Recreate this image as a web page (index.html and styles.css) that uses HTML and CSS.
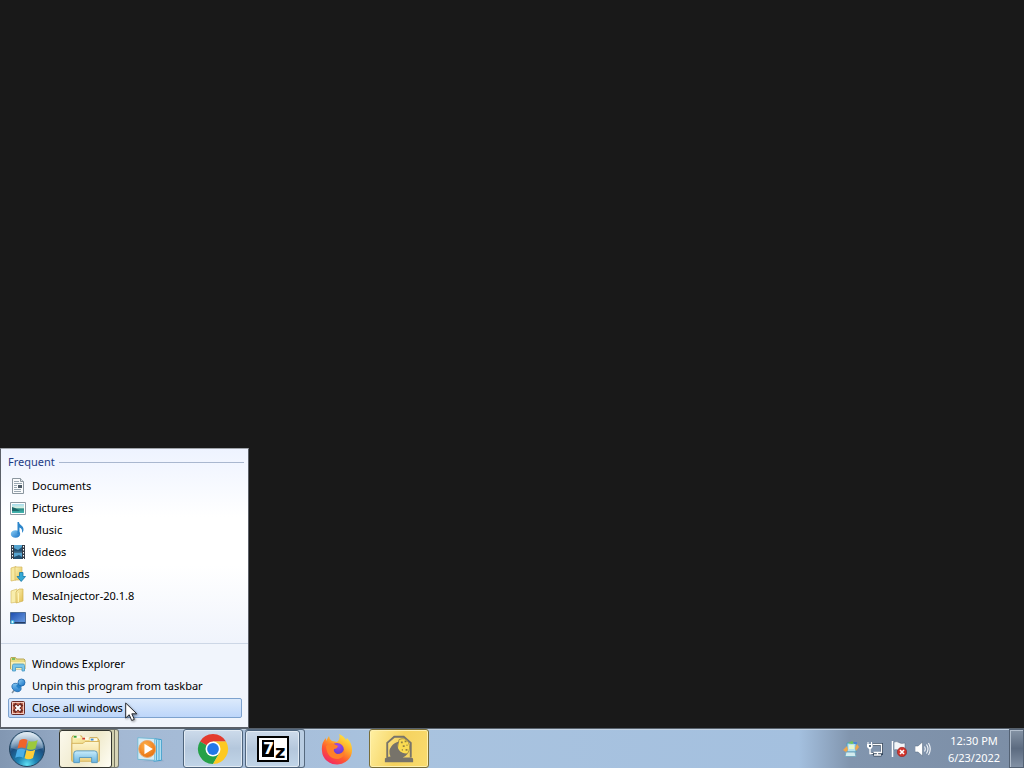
FILE: index.html
```html
<!DOCTYPE html>
<html lang="en">
<head>
<meta charset="utf-8">
<title>Desktop</title>
<link rel="stylesheet" href="styles.css">
</head>
<body>
<svg width="0" height="0" class="defs" aria-hidden="true">
  <defs>
    <linearGradient id="folder" x1="0" y1="0" x2="1" y2="1"><stop offset="0" stop-color="#fbf3b8"/><stop offset="1" stop-color="#e3bd4e"/></linearGradient>
    <linearGradient id="paper" x1="0" y1="0" x2="0" y2="1"><stop offset="0" stop-color="#fdf6cf"/><stop offset="1" stop-color="#efd486"/></linearGradient>
    <linearGradient id="blue" x1="0" y1="0" x2="1" y2="1"><stop offset="0" stop-color="#8fd0f6"/><stop offset="1" stop-color="#1670c4"/></linearGradient>
    <linearGradient id="screen" x1="0" y1="0" x2="1" y2="1"><stop offset="0" stop-color="#1c4cae"/><stop offset="1" stop-color="#6fa0e4"/></linearGradient>
    <linearGradient id="sea" x1="0" y1="0" x2="0" y2="1"><stop offset="0" stop-color="#a5dcee"/><stop offset=".4" stop-color="#d4eee0"/><stop offset=".55" stop-color="#2a8a86"/><stop offset="1" stop-color="#46b7b2"/></linearGradient>
    <linearGradient id="stand" x1="0" y1="0" x2="0" y2="1"><stop offset="0" stop-color="#c9ecfb"/><stop offset="1" stop-color="#68b4e0"/></linearGradient>
    <radialGradient id="orb" cx=".5" cy=".95" r=".9"><stop offset="0" stop-color="#5fe0f4"/><stop offset=".3" stop-color="#1f84b4"/><stop offset=".65" stop-color="#1c4f80"/><stop offset="1" stop-color="#8fb4d0"/></radialGradient>
    <linearGradient id="shine" x1="0" y1="0" x2="0" y2="1"><stop offset="0" stop-color="#fff" stop-opacity=".75"/><stop offset="1" stop-color="#fff" stop-opacity=".15"/></linearGradient>
    <radialGradient id="orange" cx=".4" cy=".3" r=".8"><stop offset="0" stop-color="#ffb04c"/><stop offset="1" stop-color="#e56a08"/></radialGradient>
    <linearGradient id="fox" x1=".85" y1="0" x2=".2" y2="1"><stop offset="0" stop-color="#fff04a"/><stop offset=".35" stop-color="#ffb02a"/><stop offset=".65" stop-color="#ff5a30"/><stop offset="1" stop-color="#f0206c"/></linearGradient>
    <radialGradient id="globe" cx=".6" cy=".2" r=".9"><stop offset="0" stop-color="#a049e8"/><stop offset="1" stop-color="#4438c8"/></radialGradient>
    <symbol id="explorer" viewBox="0 0 34 32">
      <path d="M2 28V4l1-2h9l2 3h6l1-1h8l2 3v21z" fill="url(#folder)" stroke="#c9a34b"/>
      <path d="M4 3h7M13 5h7M21 6h8" stroke="#fffbe6" stroke-width="3"/>
      <path d="M4 3h3" stroke="#35a33b" stroke-width="2"/><path d="M13 5h3" stroke="#cf3e2a" stroke-width="2"/><path d="M22 6h3" stroke="#3d8bd4" stroke-width="2"/>
      <path d="M2 29V10h12l2-2h15v21z" fill="url(#paper)" stroke="#d5b25a"/>
      <path d="M4 30.500V21q0-3 3-3h19q3 0 3 3v9.500h-6V25H10v5.500z" fill="url(#stand)" stroke="#5797bd"/>
    </symbol>
    <symbol id="explorer-small" viewBox="0 0 16 16">
      <path d="M.500 13V2.500l.5-1h4.500l1 1.500H14l1 1V13z" fill="#e9db84" stroke="#b9a85a"/>
      <path d="M2 3h3" stroke="#57b052" stroke-width="1.500"/>
      <path d="M1 6h14v7H1z" fill="#f8efb4"/>
      <path d="M2.500 15V9.500q0-1.500 1.500-1.500h9q1.500 0 1.500 1.500V15H12v-3.500H5.500V15z" fill="#7cc6ea" stroke="#4597c2" stroke-width=".8"/>
    </symbol>
  </defs>
</svg>

<main class="desktop">
  <nav class="jump-list" aria-label="Jump list">
    <section class="recent">
      <h2 class="heading">Frequent</h2>
      <button class="item">
        <svg class="icon" viewBox="0 0 16 16"><path d="M2.500.500h8l3 3v12h-11z" fill="#fafbfc" stroke="#8b969f"/><path d="M10.500.500v3h3" fill="#dfe5e9" stroke="#8b969f"/><path d="M4 3.500h5M4 5.500h8M4 7.500h3M4 9.500h3M4 11.500h7M4 13.500h7" stroke="#9ba8b2"/><path d="M8 7h4v3H8z" fill="#4c5a66"/></svg>
        Documents</button>
      <button class="item">
        <svg class="icon" viewBox="0 0 16 16"><path d="M.500 2.500h15v12H.500z" fill="#fff" stroke="#8f9ba3"/><path d="M2 4h12v9H2z" fill="url(#sea)"/><path d="M2 7l3 1 5 3H2z" fill="#1d686a"/></svg>
        Pictures</button>
      <button class="item">
        <svg class="icon" viewBox="0 0 16 16"><ellipse cx="5.500" cy="12" rx="4.700" ry="3.800" fill="url(#blue)"/><path d="M7.500 12V0H9c0 3 5 3.500 4.500 8-.2 1.500-.8 2-1.500 3 .5-3-.5-5-2.500-5.500V12z" fill="#2d86cb"/></svg>
        Music</button>
      <button class="item">
        <svg class="icon" viewBox="0 0 16 16"><path d="M1 1h14v14H1z" fill="#343c48"/><path d="M4 1h8v6.500H4zM4 8.500h8V15H4z" fill="#56a4d0"/><path d="M4 4l4 2 4-3v4.500H4zM4 13l5-2 3 2v2H4z" fill="#234f70"/><path d="M2.500 2v13M13.500 2v13" stroke="#fff" stroke-dasharray="1.500 1.500"/></svg>
        Videos</button>
      <button class="item">
        <svg class="icon" viewBox="0 0 16 16"><path d="M1 2l5-1.500V14l-5 1z" fill="#f7e9a0" stroke="#d5b75c" stroke-width=".7"/><path d="M5 1h7v13H5z" fill="url(#folder)" stroke="#d5b75c" stroke-width=".7"/><path d="M9.500 6.500h3.500v4h2.500l-4.300 5-4.200-5h2.500z" fill="#35a9d5" stroke="#187aaa" stroke-width=".8"/></svg>
        Downloads</button>
      <button class="item">
        <svg class="icon" viewBox="0 0 16 16"><path d="M1 3l6-2v13l-6 1z" fill="#f8edac" stroke="#d8c06c" stroke-width=".7"/><path d="M6 4l3-3h4v12l-7 2z" fill="url(#folder)" stroke="#d0b34f" stroke-width=".7"/><path d="M8.500 5v9" stroke="#fff4b8"/></svg>
        MesaInjector-20.1.8</button>
      <button class="item">
        <svg class="icon" viewBox="0 0 16 16"><path d="M.500 2.500h15v11H.500z" fill="url(#screen)" stroke="#4b6b96"/><path d="M1 12.500h14" stroke="#233c66"/><circle cx="2.500" cy="12" r="2" fill="#49c0e8"/><path d="M1.500 12h2M2.500 11v2" stroke="#fff" stroke-width=".7"/></svg>
        Desktop</button>
    </section>
    <section class="tasks">
      <button class="item"><svg class="icon" viewBox="0 0 16 16"><use href="#explorer-small" width="16" height="16"/></svg>Windows Explorer</button>
      <button class="item">
        <svg class="icon" viewBox="0 0 16 16"><path d="M2 15l4-5" stroke="#8795a1" stroke-width="1.500"/><ellipse cx="6.500" cy="9.500" rx="5" ry="3.800" transform="rotate(35 6.500 9.500)" fill="url(#blue)" stroke="#1a62a6" stroke-width=".7"/><path d="M6 8l4-4 3 3-4 4z" fill="#2480c8"/><circle cx="11.500" cy="4.500" r="3.500" fill="url(#blue)" stroke="#1a62a6" stroke-width=".8"/></svg>
        Unpin this program from taskbar</button>
      <button class="item active">
        <svg class="icon" viewBox="0 0 16 16"><rect x="1.500" y="1.500" width="13" height="13" rx="1" fill="#f3c9bc" stroke="#682a28"/><path d="M3 3h10v10H3z" fill="#c96a52"/><path d="M5.500 5.500l5 5M10.500 5.500l-5 5" stroke="#6f2a22" stroke-width="4" stroke-linecap="square"/><path d="M5.500 5.500l5 5M10.500 5.500l-5 5" stroke="#fff" stroke-width="2"/></svg>
        Close all windows</button>
    </section>
  </nav>
  <svg class="cursor" viewBox="0 0 13 20" aria-hidden="true"><path d="M.700 1v15l3.500-3.300 2.500 5.800 2.600-1.100-2.500-5.600h5z" fill="#fff" stroke="#26292e"/></svg>
</main>

<footer class="taskbar">
  <button class="start" aria-label="Start">
    <svg viewBox="0 0 38 38"><circle cx="19" cy="19" r="17.500" fill="url(#orb)" stroke="#23445f"/><path d="M3 18a16 16 0 0 1 32 0q-16 6-32 0z" fill="url(#shine)"/>
    <path d="M11.500 10.500q4-2.500 8-.5l-2 8.500q-3.500-2-8 0z" fill="#f0642a"/><path d="M20.700 10.700q4 2 9-.7l-2.200 8.500q-4.500 2.500-8.700.3z" fill="#9cc93c"/><path d="M9.200 19.700q4-2 8 0l-2 8q-3.700-2-8 0z" fill="#4aaee8"/><path d="M18.500 20q4 2 8.700-.3L25 28q-4 2.500-8.500.3z" fill="#fdce38"/></svg>
  </button>
  <div class="apps">
    <div class="stack">
      <button class="app explorer" aria-label="Windows Explorer"><svg viewBox="0 0 34 32"><use href="#explorer"/></svg></button>
    </div>
    <button class="app plain" aria-label="Windows Media Player">
      <svg viewBox="0 0 34 32"><path d="M8 29h23l-5-4z" fill="#7894af" opacity=".4"/><path d="M20 5l8 1v22l-8 1z" fill="#c4eaf7" stroke="#3a9dcb"/><path d="M23 6v22M25.500 6v22" stroke="#3a9dcb"/><path d="M3 4l18 1v23L3 27z" fill="#d5ebf4" stroke="#70b7d4"/><circle cx="13" cy="16" r="9" fill="url(#orange)" stroke="#e7a66b"/><path d="M10 10.500l9 5.500-9 5.500z" fill="#fff"/></svg>
    </button>
    <button class="app running" aria-label="Google Chrome">
      <svg viewBox="0 0 32 32"><path d="M16 16L3 8.500A15 15 0 0 1 29 8.500H16z" fill="#e33b2e"/><path d="M16 16L3 8.500A15 15 0 0 0 16 31l6.500-11.300z" fill="#26a148"/><path d="M16 8.500h13A15 15 0 0 1 16 31l6.500-11.300z" fill="#fdc921"/><circle cx="16" cy="16" r="7.500" fill="#fff"/><circle cx="16" cy="16" r="5.900" fill="#2478e8"/></svg>
    </button>
    <div class="stack narrow">
      <button class="app running" aria-label="7-Zip">
        <svg viewBox="0 0 32 32"><path d="M1 4h30v24H1z" fill="#fff" stroke="#000" stroke-width="2"/><path d="M5 7h12v17H5z"/><text x="6" y="21" class="seven">7</text><text x="18" y="25" class="zee">z</text></svg>
      </button>
    </div>
    <button class="app plain" aria-label="Firefox">
      <svg viewBox="0 0 32 32"><path d="M18 1q5 2 7 6l1-2q5 5 5 12A15 14 0 0 1 1 18Q0 10 5 5v3l3-5q0 3 3 5l5 1q4-3 2-8z" fill="url(#fox)"/><circle cx="16" cy="17" r="7" fill="url(#globe)"/><path d="M5 13q5-4 8-2l4 2q-1 3-4 3-1 3 3 5 6 0 7-5 2 8-6 10Q6 26 5 13z" fill="#ff8028"/></svg>
    </button>
    <button class="app alert" aria-label="Cookie Clicker">
      <svg viewBox="0 0 34 32"><path d="M4.500 25V9.500L12 3h10l7.500 6.500V25" fill="none" stroke="#77736a" stroke-width="2"/><path d="M17 6q7-3 10 3t-1 12q-5 2-11-4z" fill="#fbdb51" stroke="#a59146"/><path d="M19 9h2M23 8h2M21 13h2M25 12h1M20 17h1M24 17h2" stroke="#958342" stroke-width="1.800"/><path d="M2 26q2-2 6-2-3-6 1-11 3-4 8-5-3 5 0 9 3 4 9 4-2 3-5 4h8q3 0 3 2v3H2z" fill="#77736a"/></svg>
    </button>
  </div>
  <div class="tray">
    <button class="tray-icon" aria-label="System utility"><svg viewBox="0 0 16 16"><path d="M4 2h9v9H4z" fill="#b5e1ed" stroke="#4c9ac1"/><path d="M6 4h5v4H6z" fill="#e5f6cf"/><path d="M3 11h9l1 4.500H2z" fill="#d3ecef" stroke="#78a9bf"/><path d="M0 9l4-4 1 4-2 2zM12 7l2-4 2 3-3 4z" fill="#f0a64b"/><path d="M5 2l4-2 3 2-3 1z" fill="#71c45e"/><path d="M10 1h4v2h-3z" fill="#4a86d8"/></svg></button>
    <button class="tray-icon" aria-label="Network"><svg viewBox="0 0 16 16"><path d="M6 3.500h9v9H4.500M6.500 14h8" fill="none" stroke="#35475c" stroke-width="3"/><path d="M6 3.500h8.500v8h-8M7 14h7M10.500 12v2M3 6v6.500h3" fill="none" stroke="#fff" stroke-width="1.300"/><path d="M1 1v2M4.500 1v2" stroke="#fff"/><path d="M0 3h5.500v3L4 8H2L0 6z" fill="#fff"/><path d="M2 4h2v2H2z" fill="#52677c"/></svg></button>
    <button class="tray-icon" aria-label="Action Center"><svg viewBox="0 0 16 16"><path d="M1.500 0v16" stroke="#fff" stroke-width="1.500"/><path d="M3 1q3-1 5 .500t6 .500v8q-3 1-6-.500T3 9z" fill="#f2f5f8" stroke="#52677c" stroke-width=".5"/><circle cx="11" cy="11" r="4.700" fill="#d2352c" stroke="#8f201e" stroke-width=".6"/><path d="M9 9l4 4M13 9l-4 4" stroke="#fff" stroke-width="1.600"/></svg></button>
    <button class="tray-icon" aria-label="Volume"><svg viewBox="0 0 16 16"><path d="M0 5h3l4.500-4v14L3 11H0z" fill="#fff" stroke="#52677c" stroke-width=".5"/><path d="M9.500 5.500q1.500 2.500 0 5M11.500 3.500q3 4.500 0 9M13.500 2q3.500 6 0 12" fill="none" stroke="#f5f8fb" stroke-width="1.100"/></svg></button>
    <button class="clock"><span>12:30 PM</span><span>6/23/2022</span></button>
  </div>
  <button class="show-desktop" aria-label="Show desktop"></button>
</footer>
</body>
</html>
```
FILE: styles.css
```css
* {
  box-sizing: border-box;
}

body {
  margin: 0;
  min-height: 100vh;
  display: flex;
  flex-direction: column;
  background: #191919;
  color: #000;
  font: 11px/16px "Noto Sans", "Open Sans", sans-serif;
}

button {
  margin: 0;
  padding: 0;
  border: 0;
  background: none;
  color: inherit;
  font: inherit;
}

svg {
  display: block;
  flex: none;
}

.defs {
  position: absolute;
}

.desktop {
  position: relative;
  flex: 1;
  display: flex;
  align-items: flex-end;
}

.jump-list {
  width: 249px;
  border: 1px solid #5c6068;
  border-top-color: #a0a4aa;
  background: #fff;
}

.recent {
  padding: 5px 4px 14px 7px;
  background: linear-gradient(#eef3ff, #fff 35%, #fff 60%, #f0f4fc);
}

.heading {
  display: flex;
  align-items: center;
  gap: 4px;
  margin: 0 0 5px;
  color: #1e3c85;
  font-size: 11px;
  font-weight: 400;
  line-height: 16px;
}

.heading::after {
  content: "";
  flex: 1;
  height: 1px;
  background: #a9b7cf;
}

.item {
  display: flex;
  align-items: center;
  gap: 6px;
  width: 100%;
  height: 22px;
  padding: 0 2px;
  text-align: left;
  white-space: nowrap;
}

.icon {
  width: 16px;
  height: 16px;
}

.tasks {
  padding: 9px 6px 9px 7px;
  border-top: 1px solid #cdd7e6;
  background: #f1f5fc;
}

.active {
  height: 20px;
  margin-top: 1px;
  padding: 0 1px;
  border: 1px solid #7da2ce;
  border-radius: 2px;
  background: linear-gradient(#dceafc, #bdd6fa);
}

.cursor {
  position: absolute;
  left: 125px;
  bottom: 6px;
  width: 13px;
  height: 20px;
  filter: drop-shadow(1px 1px 1px #0006);
}

.taskbar {
  display: flex;
  height: 40px;
  border-top: 1px solid #57616c;
  background: linear-gradient(90deg, #8297b2, #a4b9d4 12%, #a9c3df 40%, #a4c0df 78%, #8195ae 83%, #7c8ea6);
  box-shadow: inset 0 1px #c2d1e2;
}

.start {
  width: 54px;
  padding-left: 8px;
}

.start svg {
  width: 38px;
  height: 38px;
}

.apps {
  display: flex;
  flex: 1;
  gap: 2px;
  padding-left: 5px;
}

.app {
  display: flex;
  align-items: center;
  justify-content: center;
  width: 60px;
  height: 39px;
  border: 1px solid transparent;
  border-radius: 3px;
}

.app svg {
  width: 32px;
  height: 32px;
}

.stack {
  width: 60px;
  border: 1px solid #70746f;
  border-left: 0;
  border-radius: 3px;
  background: linear-gradient(90deg, #d0cfae 93%, #777662 93%, #777662 95%, #d8d5b6 95%);
}

.stack .app {
  width: 53px;
  height: 38px;
}

.explorer {
  border-color: #33352f;
  background: linear-gradient(120deg, #fbf9ed, #efe9ca 55%, #fffef5);
}

.running {
  border-color: #4e647c;
  background: linear-gradient(#cddbeb, #b4c7dc 50%, #c1d5e8);
  box-shadow: inset 0 0 0 1px #e2ebf4;
}

.stack.narrow {
  border-color: #56697e;
  background: #b9cde2;
}

.stack.narrow .app {
  width: 55px;
}

.alert {
  border-color: #796d38;
  background: linear-gradient(110deg, #fff0a3, #f5d25e 50%, #f9dc70);
  box-shadow: inset 0 0 0 1px #fff1b0;
}

.seven,
.zee {
  font: bold 18px "DejaVu Sans", sans-serif;
}

.seven {
  fill: #fff;
  font-size: 16px;
}

.tray {
  display: flex;
  align-items: center;
  gap: 8px;
}

.tray-icon svg {
  width: 16px;
  height: 16px;
}

.clock {
  display: flex;
  flex-direction: column;
  align-items: center;
  width: 70px;
  color: #fff;
  line-height: 17px;
}

.show-desktop {
  width: 15px;
  border: 1px solid #536173;
  background: linear-gradient(#8593a5, #5c6b80 50%, #8190a4);
  box-shadow: inset 1px 1px #b2becd;
}
```
